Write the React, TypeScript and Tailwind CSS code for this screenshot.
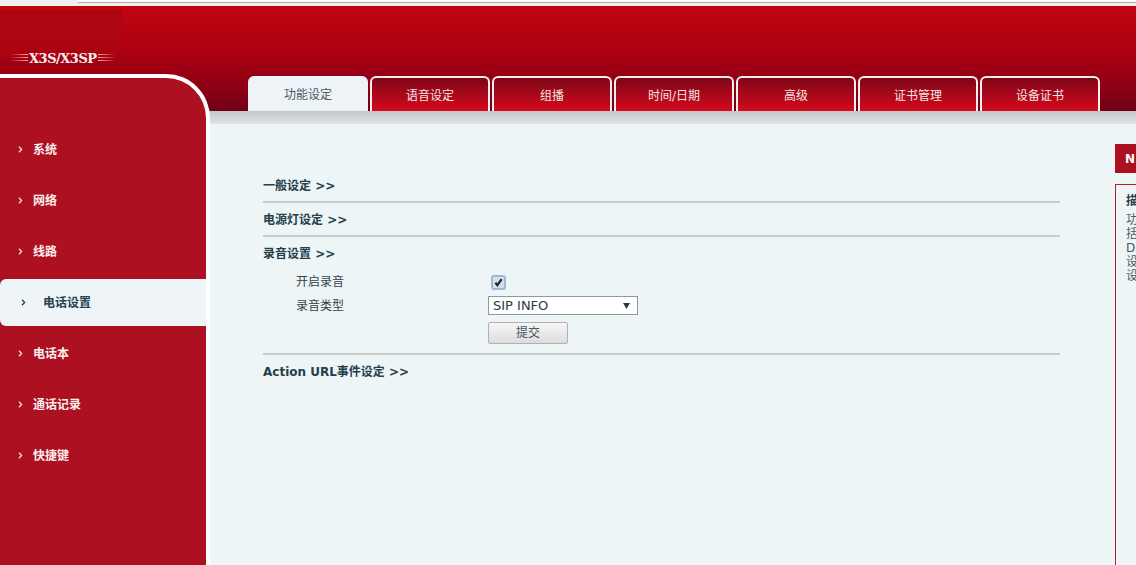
const FONT = "font-['DejaVu_Sans','Noto_Sans_CJK_SC',sans-serif]";

const TABS = ["功能设定", "语音设定", "组播", "时间/日期", "高级", "证书管理", "设备证书"];
const MENU = ["系统", "网络", "线路", "电话设置", "电话本", "通话记录", "快捷键"];

function Chevron({ active }: { active: boolean }) {
  return (
    <svg width="5" height="7" viewBox="0 0 5 7" className="shrink-0">
      <path d="M1 .8 3.6 3.5 1 6.2" fill="none" stroke={active ? "#24424f" : "#f6dcdc"} strokeWidth="1.3" />
    </svg>
  );
}

function SectionTitle({ children }: { children: string }) {
  return <div className="h-[16px] text-[12px] leading-[16px] font-bold text-[#243f4c]">{children}</div>;
}

function Rule() {
  return <div className="h-[2px] bg-[#c9cccd]" />;
}

export default function App() {
  return (
    <div className={`${FONT} w-[1136px] h-[565px] overflow-hidden bg-[#eef5f7]`}>
      <div className="h-[6px] bg-[#f0f0f0] pl-[78px]">
        <div className="h-[3px] bg-white border-b border-[#a9a9a9]" />
      </div>
      <div className="flex h-[559px] bg-[linear-gradient(180deg,#c20510_0px,#b80311_20px,#a80012_50px,#8a0015_85px,#6e0018_105px,#c4c5c8_105px,#e0e4e6_118px,#eef5f7_118px)]">
        {/* left column */}
        <div className="w-[210px] shrink-0">
          <div className="w-[122px] h-[68px] pt-[45px] pl-[10px] bg-[linear-gradient(180deg,transparent_4px,#ad0512_4px,#ad0512_36px,transparent_56px)]">
            <div className="flex items-center gap-[1px] h-[15px]">
              <div className="w-[18px] h-[9px] shrink-0 bg-[repeating-linear-gradient(180deg,#f0b0b4_0px,#f0b0b4_1px,transparent_1px,transparent_3px)] [mask-image:linear-gradient(90deg,transparent,#000)]" />
              <span className="text-[13px] leading-[15px] font-bold text-[#f8eeee] font-['DejaVu_Serif',serif] tracking-[-0.5px]">X3S/X3SP</span>
              <div className="w-[18px] h-[9px] shrink-0 bg-[repeating-linear-gradient(180deg,#f0b0b4_0px,#f0b0b4_1px,transparent_1px,transparent_3px)] [mask-image:linear-gradient(90deg,#000,transparent)]" />
            </div>
          </div>
          <div className="h-[491px] bg-[#ad1020] border-t-[4px] border-r-[4px] border-white rounded-tr-[44px] pt-[48px]">
            {MENU.map((m, i) => {
              const active = i === 3;
              return (
                <div
                  key={m}
                  className={
                    active
                      ? "flex items-center h-[47px] mb-[4px] pl-[21px] gap-[17px] bg-[#eff4f8] rounded-l-[6px] text-[#24424f] text-[12px] font-semibold"
                      : "flex items-center h-[47px] mb-[4px] pl-[18px] gap-[10px] text-[#fbeeee] text-[12px] font-bold"
                  }
                >
                  <Chevron active={active} />
                  <span>{m}</span>
                </div>
              );
            })}
          </div>
        </div>

        {/* right column */}
        <div className="flex-1 min-w-0">
          <div className="flex gap-[2px] pt-[70px] pl-[38px] h-[105px]">
            {TABS.map((t, i) =>
              i === 0 ? (
                <div key={t} className="w-[120px] h-[35px] pt-[2px] flex items-center justify-center rounded-t-[6px] bg-[#edf3f6] text-[12px] text-[#4a5a63]">
                  {t}
                </div>
              ) : (
                <div
                  key={t}
                  className="w-[120px] h-[35px] pt-[2px] flex items-center justify-center rounded-t-[6px] border-[2px] border-b-0 border-[#f4eeee] bg-[linear-gradient(180deg,#7e0618,#d40a1c)] text-[12px] text-[#f6e4e4]"
                >
                  {t}
                </div>
              ),
            )}
          </div>

          <div className="flex pt-[33px]">
            <div className="w-[797px] ml-[53px] pt-[34px] shrink-0">
              <SectionTitle>一般设定 &gt;&gt;</SectionTitle>
              <div className="mt-[7px]"><Rule /></div>
              <div className="mt-[9px]"><SectionTitle>电源灯设定 &gt;&gt;</SectionTitle></div>
              <div className="mt-[7px]"><Rule /></div>
              <div className="mt-[9px]"><SectionTitle>录音设置 &gt;&gt;</SectionTitle></div>

              <div className="mt-[12px] flex items-center h-[16px] pl-[33px] text-[12px] text-[#33434c]">
                <span className="w-[192px]">开启录音</span>
                <span className="ml-[3px] w-[15px] h-[15px] rounded-[3px] bg-[#d5deeb] border-[2px] border-[#a3b5d8] flex items-center justify-center">
                  <svg width="9" height="9" viewBox="0 0 9 9">
                    <path d="M1.4 4.8 3.4 7.2 7.6 1.2" fill="none" stroke="#20282e" strokeWidth="2.2" />
                  </svg>
                </span>
              </div>
              <div className="mt-[6px] flex items-center h-[19px] pl-[33px] text-[12px] text-[#33434c]">
                <span className="w-[192px]">录音类型</span>
                <div className="w-[150px] h-[19px] bg-white border border-[#8a9aa3] flex items-center justify-between pl-[4px] pr-[7px] text-[13px] text-[#2c3a42]">
                  <span>SIP INFO</span>
                  <svg width="7" height="6" viewBox="0 0 7 6"><path d="M0 0h7L3.5 6z" fill="#2c3a42" /></svg>
                </div>
              </div>
              <div className="mt-[7px] pl-[225px]">
                <div className="w-[80px] h-[22px] flex items-center justify-center border border-[#aeb0b2] rounded-[2px] bg-[linear-gradient(180deg,#f6f6f6,#dcdcdc)] text-[12px] text-[#4a565c]">
                  提交
                </div>
              </div>
              <div className="mt-[9px]"><Rule /></div>
              <div className="mt-[9px]"><SectionTitle>Action URL事件设定 &gt;&gt;</SectionTitle></div>
            </div>

            {/* note panel, only its left edge is in the window */}
            <div className="ml-[55px] w-[200px] shrink-0">
              <div className="h-[29px] bg-[#ad1020] pl-[10px] flex items-center text-[12px] font-bold text-white">N</div>
              <div className="mt-[11px] h-[400px] border border-[#b5202c] pl-[10px] pt-[9px] text-[12px] leading-[14px] text-[#4a5a62]">
                <div className="font-bold mb-[5px] text-[#243f4c]">描</div>
                <div>功</div>
                <div>括</div>
                <div>D</div>
                <div>设</div>
                <div>设</div>
              </div>
            </div>
          </div>
        </div>
      </div>
    </div>
  );
}
